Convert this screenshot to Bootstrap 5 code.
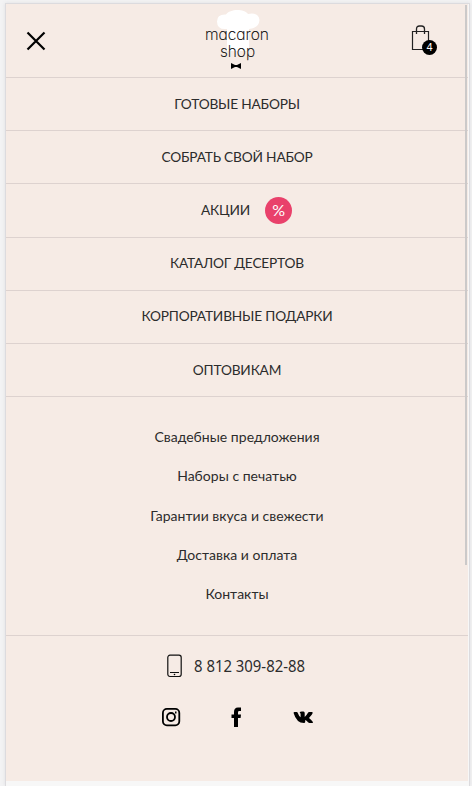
<!DOCTYPE html>
<html lang="ru">
<head>
<meta charset="utf-8">
<meta name="viewport" content="width=device-width, initial-scale=1">
<title>Macaron Shop</title>
<link href="https://cdn.jsdelivr.net/npm/bootstrap@5.3.0/dist/css/bootstrap.min.css" rel="stylesheet">
<style>
body{background:#f3f3f4;font-family:Lato,"Noto Sans",sans-serif;color:#2c2c2c;height:786px;overflow:hidden;font-size:14px;line-height:20px}
a{color:inherit;text-decoration:none}
svg{display:block}
.phone-frame{width:465px;height:783px;margin:3px 0 0 5px;border:1px solid #dcdbde;border-bottom:0;background:#f7f7f7;box-shadow:0 0 4px #dfdfe3}
.screen{width:462px;height:777px;background:#f6ebe5}
.top-bar{height:74px;border-bottom:1px solid #ddd2cf;padding:4px 32px 0 20px}
.close-btn{padding:23px 0 0;border:0;background:none}
.shop-logo{margin-left:17px}
.bag{padding-top:17px}
.bag-count{left:11px;top:32px;width:15px;height:15px;background:#000;color:#fff;font:11px/15px "Liberation Sans",sans-serif}
.main-menu a{height:53.2px;border-bottom:1px solid #ddd2cf;font-size:13.7px;letter-spacing:-.18px;padding-bottom:1px}
.main-menu .promo{padding-left:19px;padding-bottom:0}
.discount{width:27px;height:27px;background:#e9416b;color:#fff;font-size:16px;font-weight:400;margin-left:15px}
.more-menu{padding:30px 0 0;height:239px;border-bottom:1px solid #ddd2cf;gap:19.2px;letter-spacing:.02px}
.phone-link{gap:10px;padding-top:18px}
.phone-link text{font:17px "Noto Sans",sans-serif;fill:#2c2c2c}
.socials{gap:50px;padding-top:29px}
.scroll-thumb{right:2px;top:1px;width:2px;height:560px;background:#cbc9c9}
</style>
<script src="https://cdn.jsdelivr.net/npm/bootstrap@5.3.0/dist/js/bootstrap.bundle.min.js"></script>
</head>
<body>
<div class="phone-frame position-relative">
  <div class="screen">
    <header class="top-bar d-flex justify-content-between align-items-start">
      <button class="close-btn" aria-label="Закрыть"><svg width="20" height="20" viewBox="0 0 20 20"><path d="M1.500 1.500l17 17M18.500 1.500l-17 17" stroke="#000" stroke-width="2.2"/></svg></button>
      <a href="#" class="shop-logo"><svg width="66" height="62" viewBox="0 0 66 62">
        <path d="M23 21Q13 22 13 13.500Q13 6 22 6.500C26 .5 40 .5 44 6Q54.500 4 55.500 12Q55 20 45 21V43H23z" fill="#fff"/>
        <g font-family="Inter,Lato,sans-serif" font-weight="200" fill="#000" stroke="#000" stroke-width=".15" style="font-feature-settings:'cv11'"><text x="1" y="32" font-size="16" textLength="64" lengthAdjust="spacingAndGlyphs">macaron</text>
        <text x="16" y="49" font-size="16" textLength="35" lengthAdjust="spacingAndGlyphs">shop</text></g>
        <path d="M27 55l4 2h2l4-2v6l-4-2h-2l-4 2z"/></svg></a>
      <a href="#" class="bag position-relative" aria-label="Корзина"><svg width="25" height="30" viewBox="0 0 25 30"><path d="M1.500 6.500h16v18h-16z" fill="none" stroke="#222" stroke-width="1.2"/><path d="M5.500 9V4Q5.500 1 8.500 1h2Q13.500 1 13.500 4v5" fill="none" stroke="#222" stroke-width="1.3"/></svg><span class="bag-count position-absolute rounded-circle text-center">4</span></a>
    </header>
    <nav class="main-menu">
      <a href="#" class="d-flex align-items-center justify-content-center">ГОТОВЫЕ НАБОРЫ</a>
      <a href="#" class="d-flex align-items-center justify-content-center">СОБРАТЬ СВОЙ НАБОР</a>
      <a href="#" class="d-flex align-items-center justify-content-center promo">АКЦИИ<span class="discount rounded-circle d-flex align-items-center justify-content-center">%</span></a>
      <a href="#" class="d-flex align-items-center justify-content-center">КАТАЛОГ ДЕСЕРТОВ</a>
      <a href="#" class="d-flex align-items-center justify-content-center">КОРПОРАТИВНЫЕ ПОДАРКИ</a>
      <a href="#" class="d-flex align-items-center justify-content-center">ОПТОВИКАМ</a>
    </nav>
    <nav class="more-menu d-flex flex-column align-items-center">
      <a href="#">Свадебные предложения</a><a href="#">Наборы с печатью</a><a href="#">Гарантии вкуса и свежести</a><a href="#">Доставка и оплата</a><a href="#">Контакты</a>
    </nav>
    <a href="tel:+78123098288" class="phone-link d-flex align-items-center justify-content-center"><svg width="15" height="24" viewBox="0 0 15 24"><rect x=".8" y="1.200" width="13.400" height="21.300" rx="2.200" fill="none" stroke="#111" stroke-width="1.2"/><path d="M3 18.500h9" stroke="#111"/><circle cx="7.500" cy="20.500" r=".8"/></svg><svg class="overflow-visible" width="115" height="24"><text x="2" y="17.500" textLength="111" lengthAdjust="spacingAndGlyphs">8 812 309-82-88</text></svg></a>
    <div class="socials d-flex justify-content-center align-items-center">
      <a href="#" aria-label="Instagram"><svg width="20" height="20" viewBox="0 0 20 20" fill="none" stroke="#000" stroke-width="1.8"><rect x="1.900" y="1.900" width="16.400" height="16.400" rx="4"/><circle cx="10" cy="10" r="4"/><path d="M14 5.500h1.500" /></svg></a>
      <a href="#" aria-label="Facebook"><svg width="12" height="20" viewBox="0 0 12 20"><path d="M3 20v-9H.500V7.500H3V5Q3 .500 7 .500h3v3.600H8.200Q7 4.100 7 5.500v2h3L9.600 11H7v9z"/></svg></a>
      <a href="#" aria-label="VK"><svg width="21" height="13" viewBox="0 0 21 13"><path d="M11 12Q3.500 12 .600 2Q.500 1 1.500 1h2.200Q4.500 1 4.800 2Q6 5.500 7.600 6.200V3Q7.600 2 6.600 1.400Q7 .500 9 .500h1.500Q11.700.500 11.700 2v4Q13.500 4.500 15 1.800q.3-.8 1.100-.8h2.700q1.200 0 .8 1.200Q18.700 4.300 16 7q2.500 2 3.900 4q.5 1-.7 1h-2.700q-.8 0-1.500-.8Q13.500 9.400 12.200 9v2q0 1-1.200 1z"/></svg></a>
    </div>
  </div>
  <div class="scroll-thumb position-absolute"></div>
</div>
</body>
</html>
